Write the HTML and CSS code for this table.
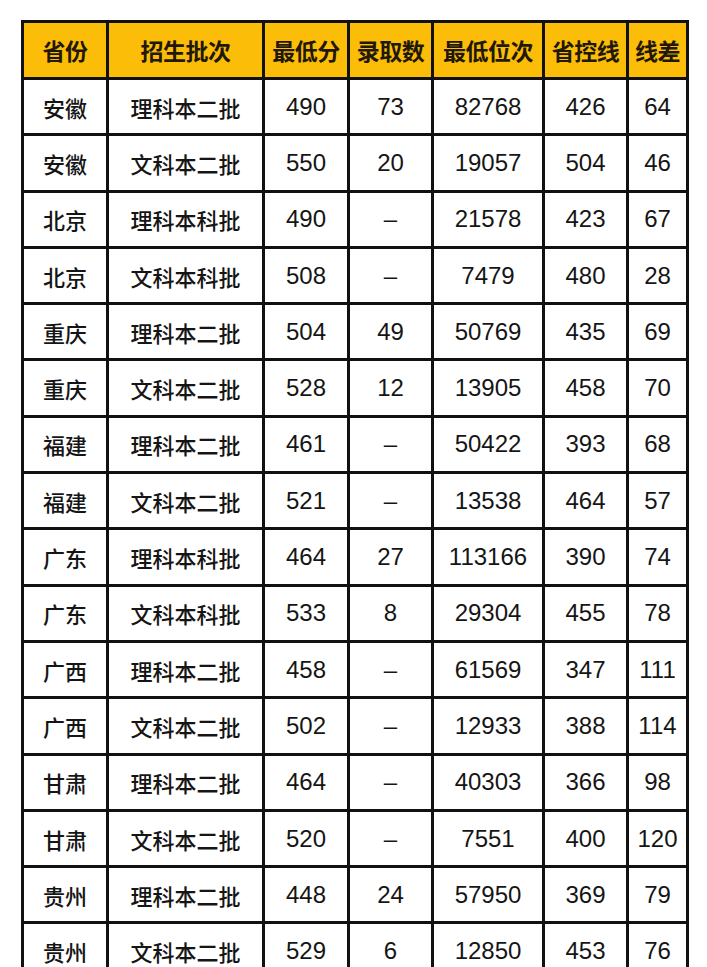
FILE: index.html
```html
<!DOCTYPE html>
<html lang="zh-CN">
<head>
<meta charset="utf-8">
<link rel="stylesheet" href="styles.css">
</head>
<body>
<div class="sheet">
  <div class="grid">
    <div class="h">省份</div><div class="h">招生批次</div><div class="h">最低分</div><div class="h">录取数</div><div class="h">最低位次</div><div class="h">省控线</div><div class="h">线差</div>
    <div class="c">安徽</div><div class="c">理科本二批</div><div class="c n">490</div><div class="c n">73</div><div class="c n">82768</div><div class="c n">426</div><div class="c n">64</div>
    <div class="c">安徽</div><div class="c">文科本二批</div><div class="c n">550</div><div class="c n">20</div><div class="c n">19057</div><div class="c n">504</div><div class="c n">46</div>
    <div class="c">北京</div><div class="c">理科本科批</div><div class="c n">490</div><div class="c n">–</div><div class="c n">21578</div><div class="c n">423</div><div class="c n">67</div>
    <div class="c">北京</div><div class="c">文科本科批</div><div class="c n">508</div><div class="c n">–</div><div class="c n">7479</div><div class="c n">480</div><div class="c n">28</div>
    <div class="c">重庆</div><div class="c">理科本二批</div><div class="c n">504</div><div class="c n">49</div><div class="c n">50769</div><div class="c n">435</div><div class="c n">69</div>
    <div class="c">重庆</div><div class="c">文科本二批</div><div class="c n">528</div><div class="c n">12</div><div class="c n">13905</div><div class="c n">458</div><div class="c n">70</div>
    <div class="c">福建</div><div class="c">理科本二批</div><div class="c n">461</div><div class="c n">–</div><div class="c n">50422</div><div class="c n">393</div><div class="c n">68</div>
    <div class="c">福建</div><div class="c">文科本二批</div><div class="c n">521</div><div class="c n">–</div><div class="c n">13538</div><div class="c n">464</div><div class="c n">57</div>
    <div class="c">广东</div><div class="c">理科本科批</div><div class="c n">464</div><div class="c n">27</div><div class="c n">113166</div><div class="c n">390</div><div class="c n">74</div>
    <div class="c">广东</div><div class="c">文科本科批</div><div class="c n">533</div><div class="c n">8</div><div class="c n">29304</div><div class="c n">455</div><div class="c n">78</div>
    <div class="c">广西</div><div class="c">理科本二批</div><div class="c n">458</div><div class="c n">–</div><div class="c n">61569</div><div class="c n">347</div><div class="c n">111</div>
    <div class="c">广西</div><div class="c">文科本二批</div><div class="c n">502</div><div class="c n">–</div><div class="c n">12933</div><div class="c n">388</div><div class="c n">114</div>
    <div class="c">甘肃</div><div class="c">理科本二批</div><div class="c n">464</div><div class="c n">–</div><div class="c n">40303</div><div class="c n">366</div><div class="c n">98</div>
    <div class="c">甘肃</div><div class="c">文科本二批</div><div class="c n">520</div><div class="c n">–</div><div class="c n">7551</div><div class="c n">400</div><div class="c n">120</div>
    <div class="c">贵州</div><div class="c">理科本二批</div><div class="c n">448</div><div class="c n">24</div><div class="c n">57950</div><div class="c n">369</div><div class="c n">79</div>
    <div class="c">贵州</div><div class="c">文科本二批</div><div class="c n">529</div><div class="c n">6</div><div class="c n">12850</div><div class="c n">453</div><div class="c n">76</div>
  </div>
</div>
</body>
</html>
```

FILE: styles.css
```css
html, body {
  margin: 0;
  padding: 0;
  background: #ffffff;
  overflow: hidden;
}
.sheet {
  padding: 20px 0 0 21px;
  height: 967px;
  box-sizing: border-box;
}
.grid {
  display: inline-grid;
  grid-template-columns: 82px 153px 82px 81px 108px 81px 57px;
  grid-template-rows: 54px;
  grid-auto-rows: 53.3px;
  gap: 3px;
  padding: 3px;
  background: #111111;
  font-family: "Noto Sans CJK SC", "Liberation Sans", sans-serif;
}
.h {
  background: #fbbd08;
  color: #221808;
  font-weight: 700;
  font-size: 23px;
  display: flex;
  align-items: center;
  justify-content: center;
  white-space: nowrap;
  letter-spacing: -0.5px;
}
.c {
  background: #ffffff;
  color: #151515;
  font-size: 22px;
  font-weight: 500;
  display: flex;
  align-items: center;
  justify-content: center;
  white-space: nowrap;
}
.n {
  font-family: "Liberation Sans", Arial, sans-serif;
  font-size: 24px;
  font-weight: 400;
}
```
